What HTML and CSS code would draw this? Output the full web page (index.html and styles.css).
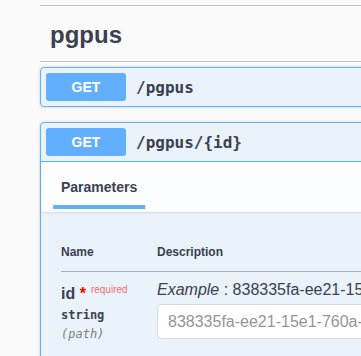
FILE: index.html
```html
<!DOCTYPE html>
<html lang="en">
<head>
    <meta charset="UTF-8">
    <meta name="viewport" content="width=device-width, initial-scale=1.0">
    <title>pgpus API</title>
    <link rel="stylesheet" href="styles.css">
</head>
<body>
    <div class="wrapper">
        <div class="tag-section">
            <h3 class="opblock-tag">pgpus</h3>

            <div class="opblock">
                <div class="opblock-summary">
                    <span class="method">GET</span>
                    <span class="path">/pgpus</span>
                </div>
            </div>

            <div class="opblock is-open">
                <div class="opblock-summary">
                    <span class="method">GET</span>
                    <span class="path">/pgpus/{id}</span>
                </div>
                <div class="section-header">
                    <h4 class="tab-item"><span>Parameters</span></h4>
                </div>
                <div class="parameters">
                    <table>
                        <thead>
                            <tr>
                                <th class="col-name">Name</th>
                                <th>Description</th>
                            </tr>
                        </thead>
                        <tbody>
                            <tr>
                                <td class="col-name">
                                    <div class="param-name required">id<span>&nbsp;*</span></div>
                                    <div class="param-type">string</div>
                                    <div class="param-in">(path)</div>
                                </td>
                                <td class="col-desc">
                                    <div class="param-example"><i>Example</i> : 838335fa-ee21-15e1-760a-4f2b9c1d7e30</div>
                                    <input type="text" placeholder="838335fa-ee21-15e1-760a-4f2b9c1d7e30">
                                </td>
                            </tr>
                        </tbody>
                    </table>
                </div>
            </div>
        </div>
    </div>
</body>
</html>
```

FILE: styles.css
```css
body {
    margin: 0;
    background-color: #fafafa;
    color: #3b4151;
    font-family: "Liberation Sans", Arial, sans-serif;
    overflow: hidden;
}

.wrapper {
    width: 640px;
    margin-left: 40px;
    padding-top: 5px;
}

.tag-section {
    border-top: 1px solid rgba(59, 65, 81, 0.3);
}

.opblock-tag {
    margin: 0 0 5px;
    padding: 15px 10px 12px;
    font-size: 24px;
    line-height: 28px;
    font-weight: bold;
    border-bottom: 1px solid rgba(59, 65, 81, 0.3);
}

.opblock {
    border: 1px solid #61affe;
    background-color: rgba(97, 175, 254, 0.1);
    border-radius: 4px;
    box-shadow: 0 0 3px rgba(0, 0, 0, 0.19);
    margin-bottom: 15px;
}

.opblock-summary {
    display: flex;
    align-items: center;
    padding: 5px;
}

.is-open .opblock-summary {
    border-bottom: 1px solid #61affe;
}

.method {
    width: 80px;
    height: 28px;
    line-height: 28px;
    text-align: center;
    background-color: #61affe;
    color: #fff;
    font-size: 14px;
    font-weight: bold;
    border-radius: 3px;
}

.path {
    padding: 0 10px;
    font-family: "DejaVu Sans Mono", monospace;
    font-size: 16px;
    font-weight: bold;
}

.section-header {
    display: flex;
    align-items: center;
    min-height: 50px;
    padding: 0 20px;
    box-sizing: border-box;
    background-color: rgba(255, 255, 255, 0.8);
    box-shadow: 0 1px 2px rgba(0, 0, 0, 0.1);
}

.tab-item {
    margin: 0;
    font-size: 14px;
    line-height: 16px;
}

.tab-item span {
    display: inline-block;
    position: relative;
}

.tab-item span::after {
    content: "";
    position: absolute;
    left: 50%;
    bottom: -14px;
    width: 120%;
    height: 4px;
    background-color: #61affe;
    transform: translateX(-50%);
}

.parameters {
    padding: 21px 20px 20px;
}

table {
    border-collapse: collapse;
    width: 100%;
}

th {
    padding: 12px 0;
    text-align: left;
    font-size: 12px;
    line-height: 14px;
    border-bottom: 1px solid rgba(59, 65, 81, 0.2);
}

td {
    vertical-align: top;
    padding: 9px 0 0;
}

.col-name {
    width: 96px;
}

td.col-name {
    padding: 9px 0 10px;
}

.param-name {
    font-size: 16px;
    line-height: 18px;
}

.param-name.required {
    font-weight: bold;
}

.param-name.required span {
    color: red;
}

.param-name.required::after {
    content: "required";
    font-size: 10px;
    font-weight: normal;
    padding: 5px;
    color: rgba(255, 0, 0, 0.6);
    vertical-align: 6px;
}

.param-type {
    padding: 5px 0;
    font-family: "DejaVu Sans Mono", monospace;
    font-size: 12px;
    line-height: 14px;
    font-weight: bold;
}

.param-in {
    font-family: "DejaVu Sans Mono", monospace;
    font-size: 12px;
    line-height: 14px;
    font-style: italic;
    color: gray;
}

.param-example {
    font-size: 16px;
    line-height: 18px;
    white-space: nowrap;
}

input[type=text] {
    display: block;
    width: 360px;
    margin: 5px 0;
    padding: 8px 10px;
    font-family: "Liberation Sans", Arial, sans-serif;
    font-size: 16px;
    line-height: 17px;
    border: 1px solid #d9d9d9;
    border-radius: 4px;
    background-color: #fff;
}

input::placeholder {
    color: #959595;
}
```
